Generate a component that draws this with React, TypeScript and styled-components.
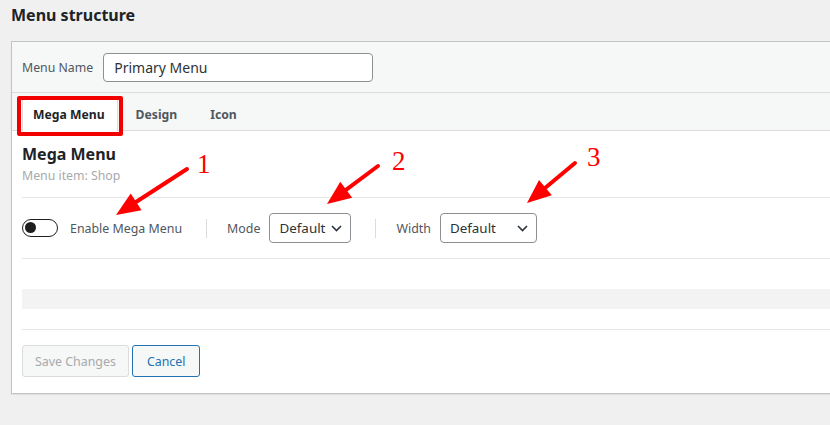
import React from "react";
import styled, { createGlobalStyle } from "styled-components";

const GlobalStyle = createGlobalStyle`
  html, body {
    margin: 0;
    padding: 0;
    background: #f0f0f0;
  }
  body {
    font-family: "Noto Sans", "Open Sans", Arial, sans-serif;
    color: #1d2327;
    overflow: hidden;
  }
  * { box-sizing: border-box; }
`;

const Page = styled.div`
  position: relative;
  width: 830px;
  height: 425px;
  padding-left: 11px;
  overflow: hidden;
`;

const Title = styled.h2`
  margin: 0;
  height: 41px;
  padding-top: 5px;
  font-size: 16px;
  line-height: 20px;
  font-weight: 700;
  color: #1d2327;
`;

const Panel = styled.div`
  background: #fff;
  border: 1px solid #c3c4c7;
  border-right: none;
  box-shadow: 0 1px 1px rgba(0, 0, 0, 0.06);
`;

const NameRow = styled.div`
  display: flex;
  align-items: center;
  gap: 10px;
  height: 51px;
  padding-left: 10px;
  background: #f6f7f7;
  border-bottom: 1px solid #dcdcde;
`;

const FieldLabel = styled.span`
  font-size: 12.3px;
  color: #50575e;
`;

const TextInput = styled.div`
  width: 270px;
  height: 29px;
  display: flex;
  align-items: center;
  padding: 0 10px;
  border: 1px solid #8c8f94;
  border-radius: 4px;
  background: #fff;
  font-size: 14px;
  color: #2c3338;
`;

const TabBar = styled.div`
  display: flex;
  align-items: flex-end;
  gap: 3px;
  height: 38px;
  padding-left: 10px;
  background: #f6f7f7;
  border-bottom: 1px solid #dcdcde;
`;

const Tab = styled.div<{ $active?: boolean }>`
  position: relative;
  height: ${(p) => (p.$active ? "33px" : "32px")};
  margin-bottom: ${(p) => (p.$active ? "-1px" : "0")};
  display: flex;
  align-items: center;
  padding: ${(p) => (p.$active ? "0 12px 0 10px" : "0 14px")};
  background: ${(p) => (p.$active ? "#fff" : "transparent")};
  border-left: 1px solid ${(p) => (p.$active ? "#dcdcde" : "transparent")};
  border-right: 1px solid ${(p) => (p.$active ? "#dcdcde" : "transparent")};
  font-size: 12.2px;
  font-weight: 700;
  color: ${(p) => (p.$active ? "#1d2327" : "#50575e")};
`;

const Highlight = styled.span`
  position: absolute;
  top: -2px;
  left: -6px;
  right: -6px;
  bottom: -5px;
  border: 4px solid #f20000;
  border-radius: 2px;
`;

const Body = styled.div`
  padding: 12px 0 16px 10px;
`;

const Heading = styled.h3`
  margin: 0;
  font-size: 16px;
  line-height: 22px;
  font-weight: 700;
  color: #1d2327;
`;

const SubText = styled.div`
  margin-top: 2px;
  font-size: 12.3px;
  line-height: 18px;
  color: #a7aaad;
`;

const Rule = styled.div<{ $top: number }>`
  margin-top: ${(p) => p.$top}px;
  height: 1px;
  background: #e6e6e6;
`;

const ControlRow = styled.div`
  display: flex;
  align-items: center;
  height: 30px;
  margin-top: 15px;
`;

const Toggle = styled.span`
  position: relative;
  width: 36px;
  height: 18px;
  margin-right: 12px;
  border: 1.5px solid #1e1e1e;
  border-radius: 9px;
  flex-shrink: 0;

  &::after {
    content: "";
    position: absolute;
    top: 2px;
    left: 2px;
    width: 11px;
    height: 11px;
    border-radius: 50%;
    background: #1e1e1e;
  }
`;

const ControlLabel = styled.span<{ $gap: number }>`
  margin-right: ${(p) => p.$gap}px;
  font-size: 12.4px;
  color: #50575e;
`;

const VRule = styled.span`
  width: 1px;
  height: 19px;
  margin: 0 20px 0 24px;
  background: #dcdcde;
`;

const Select = styled.div<{ $width: number }>`
  width: ${(p) => p.$width}px;
  height: 30px;
  display: flex;
  align-items: center;
  justify-content: space-between;
  padding: 0 8px 0 9px;
  border: 1px solid #8c8f94;
  border-radius: 4px;
  background: #fff;
  font-size: 13.4px;
  color: #2c3338;
`;

const GrayBar = styled.div`
  margin-top: 30px;
  height: 20px;
  background: #f3f3f3;
`;

const Actions = styled.div`
  display: flex;
  gap: 3px;
  margin-top: 15px;
`;

const Button = styled.button<{ $primary?: boolean }>`
  height: 32px;
  padding: 0 ${(p) => (p.$primary ? 14 : 12)}px;
  font-family: inherit;
  font-size: 12.4px;
  border-radius: 3px;
  background: #f6f7f7;
  border: 1px solid ${(p) => (p.$primary ? "#2271b1" : "#dcdcde")};
  color: ${(p) => (p.$primary ? "#2271b1" : "#a7aaad")};
`;

const Overlay = styled.svg`
  position: absolute;
  top: 0;
  left: 0;
  pointer-events: none;
`;

const Chevron = () => (
  <svg width="11" height="7" viewBox="0 0 11 7">
    <path d="M1 1l4.5 4.5L10 1" fill="none" stroke="#2c3338" strokeWidth="1.6" />
  </svg>
);

const arrows = [
  { x1: 187, y1: 169, x2: 116, y2: 215, n: "1", tx: 197, ty: 173 },
  { x1: 378, y1: 166, x2: 327, y2: 204, n: "2", tx: 392, ty: 170 },
  { x1: 575, y1: 163, x2: 527, y2: 203, n: "3", tx: 587, ty: 166 },
];

const Arrow = ({ x1, y1, x2, y2 }: { x1: number; y1: number; x2: number; y2: number }) => {
  const dx = x2 - x1;
  const dy = y2 - y1;
  const len = Math.hypot(dx, dy);
  const ux = dx / len;
  const uy = dy / len;
  const head = 24;
  const half = 10;
  const bx = x2 - ux * head;
  const by = y2 - uy * head;
  const pts = `${x2},${y2} ${bx - uy * half},${by + ux * half} ${bx + uy * half},${by - ux * half}`;
  return (
    <g>
      <line x1={x1} y1={y1} x2={bx + ux * 2} y2={by + uy * 2} stroke="#f00" strokeWidth="4" strokeLinecap="round" />
      <polygon points={pts} fill="#f00" />
    </g>
  );
};

export default function App() {
  return (
    <Page>
      <GlobalStyle />
      <Title>Menu structure</Title>
      <Panel>
        <NameRow>
          <FieldLabel>Menu Name</FieldLabel>
          <TextInput>Primary Menu</TextInput>
        </NameRow>
        <TabBar>
          <Tab $active>
            Mega Menu
            <Highlight />
          </Tab>
          <Tab>Design</Tab>
          <Tab>Icon</Tab>
        </TabBar>
        <Body>
          <Heading>Mega Menu</Heading>
          <SubText>Menu item: Shop</SubText>
          <Rule $top={12} />
          <ControlRow>
            <Toggle />
            <ControlLabel $gap={0}>Enable Mega Menu</ControlLabel>
            <VRule />
            <ControlLabel $gap={9}>Mode</ControlLabel>
            <Select $width={82}>
              Default
              <Chevron />
            </Select>
            <VRule />
            <ControlLabel $gap={9}>Width</ControlLabel>
            <Select $width={97}>
              Default
              <Chevron />
            </Select>
          </ControlRow>
          <Rule $top={15} />
          <GrayBar />
          <Rule $top={20} />
          <Actions>
            <Button>Save Changes</Button>
            <Button $primary>Cancel</Button>
          </Actions>
        </Body>
      </Panel>
      <Overlay width="830" height="425" viewBox="0 0 830 425">
        {arrows.map((a) => (
          <g key={a.n}>
            <Arrow x1={a.x1} y1={a.y1} x2={a.x2} y2={a.y2} />
            <text x={a.tx} y={a.ty} fill="#f00" fontSize="27" fontFamily="'Liberation Serif', serif">
              {a.n}
            </text>
          </g>
        ))}
      </Overlay>
    </Page>
  );
}
